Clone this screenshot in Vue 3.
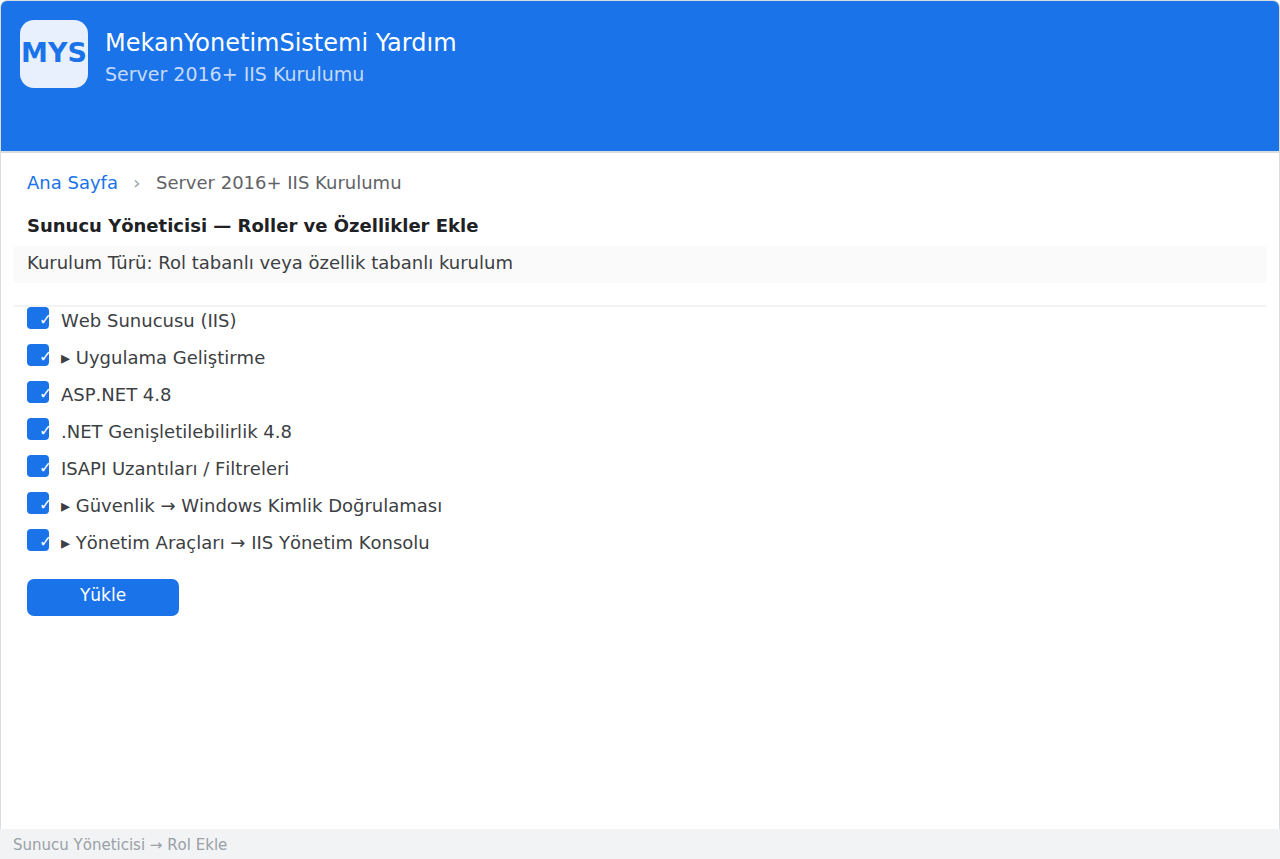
<script setup>
import { ref } from 'vue'

const roles = ref([
  { id: 'iis', label: 'Web Sunucusu (IIS)', checked: true },
  { id: 'appdev', label: '▸ Uygulama Geliştirme', checked: true },
  { id: 'aspnet', label: 'ASP.NET 4.8', checked: true },
  { id: 'netext', label: '.NET Genişletilebilirlik 4.8', checked: true },
  { id: 'isapi', label: 'ISAPI Uzantıları / Filtreleri', checked: true },
  { id: 'security', label: '▸ Güvenlik → Windows Kimlik Doğrulaması', checked: true },
  { id: 'tools', label: '▸ Yönetim Araçları → IIS Yönetim Konsolu', checked: true },
])
</script>

<template>
  <div class="page">
    <div class="window">
      <header class="header">
        <div class="logo">MYS</div>
        <div class="titles">
          <h1>MekanYonetimSistemi Yardım</h1>
          <p>Server 2016+ IIS Kurulumu</p>
        </div>
      </header>
      <main class="content">
        <nav class="crumbs">
          <a href="#">Ana Sayfa</a>
          <span class="sep">›</span>
          <span>Server 2016+ IIS Kurulumu</span>
        </nav>
        <h2>Sunucu Yöneticisi — Roller ve Özellikler Ekle</h2>
        <p class="kind">Kurulum Türü: Rol tabanlı veya özellik tabanlı kurulum</p>
        <ul class="roles">
          <li v-for="role in roles" :key="role.id">
            <input :id="role.id" v-model="role.checked" type="checkbox">
            <label :for="role.id">{{ role.label }}</label>
          </li>
        </ul>
        <button class="install" type="button">Yükle</button>
      </main>
    </div>
    <footer class="status">Sunucu Yöneticisi → Rol Ekle</footer>
  </div>
</template>

<style>
body {
  background: #fff;
}
</style>

<style scoped>
.page {
  display: flex;
  flex-direction: column;
  min-height: 100vh;
  background: #fff;
  color: #3c4043;
  font-family: "DejaVu Sans", sans-serif;
  font-size: 18px;
  line-height: 24px;
}

h1,
h2,
p,
ul {
  margin: 0;
  padding: 0;
}

h2,
.roles,
.install,
.status {
  font-kerning: none;
}

.window {
  flex: 1;
  box-sizing: border-box;
  border: 1px solid #dadce0;
  border-bottom: 0;
  border-radius: 7px 7px 0 0;
  overflow: hidden;
}

.header {
  display: flex;
  align-items: flex-start;
  gap: 17px;
  box-sizing: border-box;
  min-height: 152px;
  padding: 19px;
  border-bottom: 2px solid #dadce0;
  background: #1a73e8;
}

.logo {
  display: flex;
  justify-content: center;
  width: 68px;
  height: 68px;
  border-radius: 14px;
  background: #e8f0fe;
  color: #1a73e8;
  font-size: 27px;
  font-weight: bold;
  line-height: 66px;
}

.titles {
  padding-top: 6px;
}

h1 {
  color: #fff;
  font-size: 24px;
  font-weight: normal;
  line-height: 34px;
}

.titles p {
  color: #c6dafc;
  font-size: 19px;
  line-height: 28px;
}

.content {
  padding: 18px 12px;
}

.crumbs {
  display: flex;
  padding: 0 14px;
  color: #5f6368;
}

.crumbs a {
  color: #1a73e8;
  text-decoration: none;
}

.sep {
  width: 38px;
  color: #9aa0a6;
  text-align: center;
}

h2 {
  padding: 16px 14px 5px;
  color: #202124;
  font-size: 18px;
  line-height: 30px;
}

.kind {
  padding: 5px 14px 8px;
  border-radius: 4px;
  background: #fafafa;
}

.roles {
  margin-top: 22px;
  border-top: 2px solid #f1f3f4;
  list-style: none;
}

.roles li {
  display: flex;
  gap: 12px;
  height: 37px;
  padding: 0 14px;
}

.roles input {
  flex: none;
  width: 22px;
  height: 22px;
  margin: 0;
  border-radius: 4px;
  background: #fff;
  box-shadow: inset 0 0 0 2px #5f6368;
  appearance: none;
  overflow: hidden;
}

.roles input:checked {
  background: #1a73e8;
  box-shadow: none;
}

.roles input:checked::before {
  display: block;
  padding-left: 12px;
  color: #fff;
  content: "✓";
  font: 16px/25px "DejaVu Sans", sans-serif;
}

.roles label {
  padding-top: 2px;
}

.install {
  display: block;
  width: 152px;
  height: 37px;
  margin: 13px 14px 0;
  padding: 0 0 6px;
  border: 0;
  border-radius: 7px;
  background: #1a73e8;
  color: #fff;
  font-family: inherit;
  font-size: 17px;
  line-height: 30px;
}

.status {
  padding: 4px 13px 2px;
  background: #f1f3f4;
  color: #9aa0a6;
  font-size: 15px;
}
</style>
